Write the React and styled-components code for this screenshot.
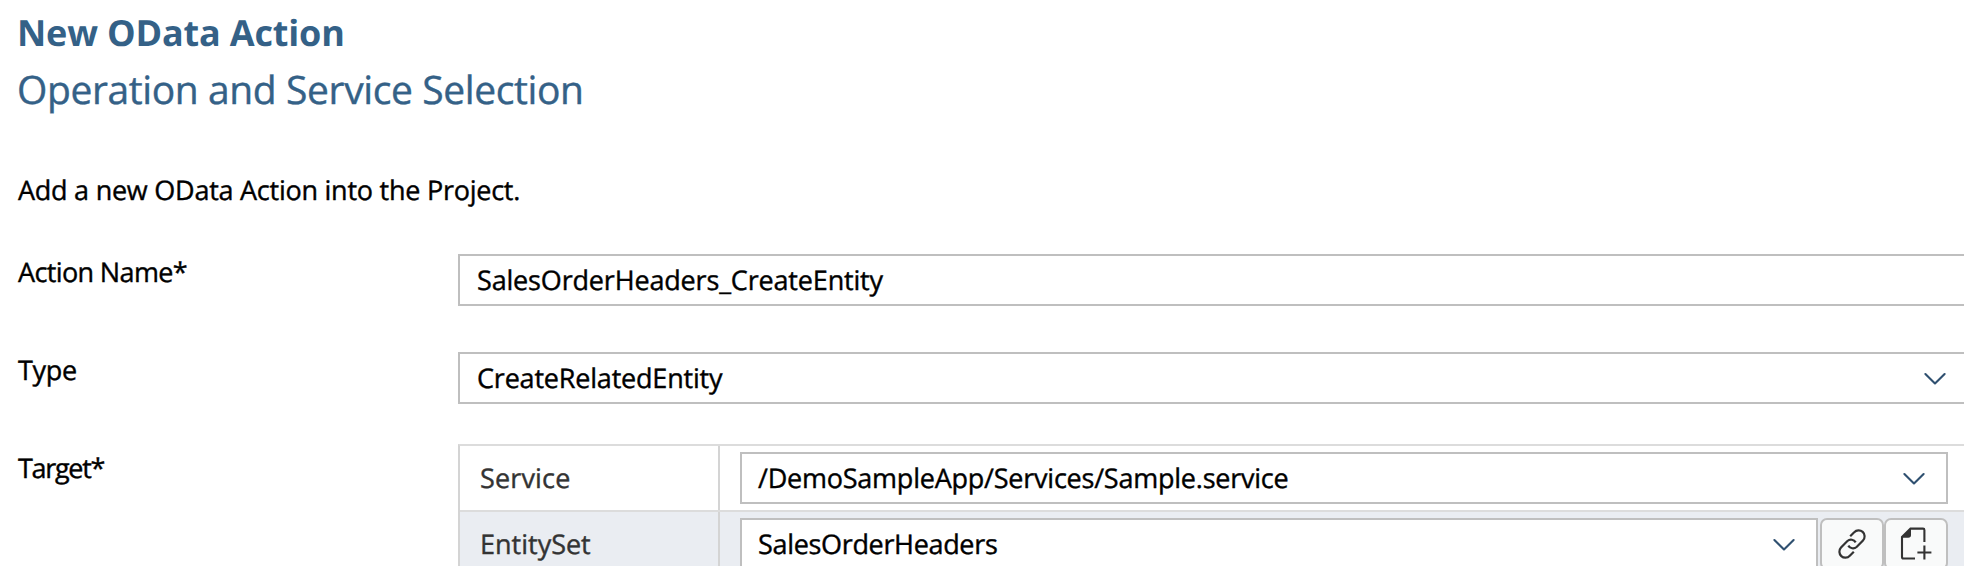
import React from 'react';
import styled, { createGlobalStyle } from 'styled-components';

const GlobalStyle = createGlobalStyle`
  *, *::before, *::after { box-sizing: border-box; }
  html, body { margin: 0; background: #fff; overflow: hidden; }
  body {
    font-family: "Open Sans", "Noto Sans", sans-serif;
    font-size: 27px;
    font-weight: 400;
    color: #000;
    text-rendering: geometricPrecision;
    -webkit-text-stroke: 0.4px currentColor;
  }
`;

const Page = styled.main`
  width: 100vw;
  height: 566px;
  overflow: hidden;
`;

const Wizard = styled.div`
  display: flex;
  flex-direction: column;
  width: 1970px;
  padding: 9px 0 0 18px;
`;

const Title = styled.h1`
  margin: 0 0 0 -1px;
  font-size: 36px;
  font-weight: 700;
  line-height: 48px;
  letter-spacing: -0.17px;
  color: #346187;
  -webkit-text-stroke: 0;
`;

const Subtitle = styled.h2`
  margin: 5px 0 0 -1px;
  font-size: 39px;
  font-weight: 400;
  line-height: 56px;
  letter-spacing: -0.39px;
  color: #346187;
`;

const Intro = styled.p`
  margin: 54px 0 46px;
  line-height: 36px;
  letter-spacing: -0.25px;
`;

const Fields = styled.div`
  display: grid;
  grid-template-columns: 440px 1fr;
  align-items: start;
`;

const Label = styled.label`
  padding-top: ${(p) => p.$offset || 0}px;
  line-height: 36px;
  letter-spacing: ${(p) => p.$tracking || 0}px;
`;

const Control = styled.div`
  flex: 1;
  display: flex;
  align-items: center;
  justify-content: space-between;
  height: 52px;
  margin-bottom: ${(p) => p.$gap || 0}px;
  padding: ${(p) => (p.$inTable ? '0 21px 0 16px' : '0 22px 0 17px')};
  border: 2px solid #bfbfbf;
  background: #fff;
`;

const Value = styled.span`
  line-height: 48px;
  letter-spacing: ${(p) => p.$tracking || 0}px;
  white-space: nowrap;
`;

const Table = styled.div`
  border-top: 2px solid #dcdcdc;
  border-left: 2px solid #d4d4d4;
`;

const TableRow = styled.div`
  display: grid;
  grid-template-columns: 260px 1fr;
  height: 66px;
  border-bottom: 2px solid #dcdcdc;
  background: ${(p) => (p.$shaded ? '#eaedf2' : '#fff')};
`;

const NameCell = styled.div`
  padding-left: 20px;
  border-right: 2px solid #d4d4d4;
  line-height: 64px;
  letter-spacing: ${(p) => p.$tracking || 0}px;
  color: #333;
`;

const ValueCell = styled.div`
  display: flex;
  padding: 6px 22px 0 20px;
`;

const Actions = styled.div`
  display: flex;
  margin-left: 2px;
`;

const IconButton = styled.button`
  display: flex;
  align-items: center;
  justify-content: center;
  width: 64px;
  height: 52px;
  padding: 0;
  border: 2px solid #bfbfbf;
  border-radius: 7px;
  background: #f9fafa;
`;

const ChevronSvg = styled.svg`
  display: block;
  flex: none;
  margin-top: 1px;
`;

const Chevron = () => (
  <ChevronSvg width="22" height="14" viewBox="0 0 22 14" fill="none" stroke="#2f5070" strokeWidth="2.1" strokeLinecap="round" strokeLinejoin="round">
    <path d="M1.4 2 L11 11.5 L20.6 2" />
  </ChevronSvg>
);

const LinkIcon = () => (
  <svg width="32" height="32" viewBox="0 0 32 32" fill="none" stroke="#333" strokeWidth="2.2" strokeLinecap="butt">
    <path d="M14.2 8.3 L18.2 4.2 A5.5 5.5 0 0 1 27 12.4 L20.6 19 A5.4 5.4 0 0 1 12.3 17.6" />
    <path d="M17.8 23.7 L13.8 27.8 A5.5 5.5 0 0 1 5 19.6 L11.4 13 A5.4 5.4 0 0 1 19.7 14.4" />
  </svg>
);

const AddDocumentIcon = () => (
  <svg width="32" height="34" viewBox="0 0 32 34" fill="none" stroke="#333" strokeWidth="2.1">
    <path d="M15 31.5 H3.5 Q2 31.5 2 30 V10 L10.5 1.6 H23 Q24.4 1.6 24.4 3 V15" />
    <path d="M1.5 10.8 L11 1 V8 Q11 10.8 8.2 10.8 Z" fill="#333" stroke="none" />
    <path d="M24.4 18.5 V32.5 M17.4 25.5 H31.4" />
  </svg>
);

export default function App() {
  return (
    <Page>
      <GlobalStyle />
      <Wizard>
        <Title>New OData Action</Title>
        <Subtitle>Operation and Service Selection</Subtitle>
        <Intro>Add a new OData Action into the Project.</Intro>
        <Fields>
          <Label $tracking={-0.63}>Action Name*</Label>
          <Control $gap={46}>
            <Value $tracking={-0.17}>SalesOrderHeaders_CreateEntity</Value>
          </Control>

          <Label $tracking={-0.3}>Type</Label>
          <Control $gap={40}>
            <Value $tracking={-0.2}>CreateRelatedEntity</Value>
            <Chevron />
          </Control>

          <Label $offset={6} $tracking={-1.3}>Target*</Label>
          <Table>
            <TableRow>
              <NameCell $tracking={0.15}>Service</NameCell>
              <ValueCell>
                <Control $inTable>
                  <Value $tracking={-0.23}>/DemoSampleApp/Services/Sample.service</Value>
                  <Chevron />
                </Control>
              </ValueCell>
            </TableRow>
            <TableRow $shaded>
              <NameCell>EntitySet</NameCell>
              <ValueCell>
                <Control $inTable>
                  <Value $tracking={-0.33}>SalesOrderHeaders</Value>
                  <Chevron />
                </Control>
                <Actions>
                  <IconButton aria-label="Link"><LinkIcon /></IconButton>
                  <IconButton aria-label="Add document"><AddDocumentIcon /></IconButton>
                </Actions>
              </ValueCell>
            </TableRow>
          </Table>
        </Fields>
      </Wizard>
    </Page>
  );
}
